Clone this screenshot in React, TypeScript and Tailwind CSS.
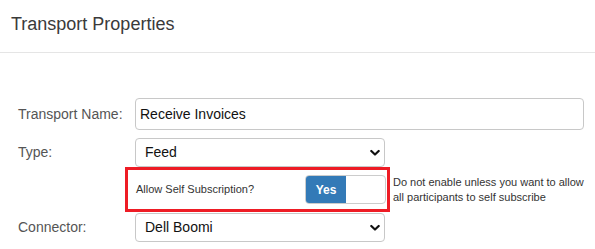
import { useState } from "react";

function Chevron() {
  return (
    <svg
      width="10"
      height="7"
      viewBox="0 0 10 7"
      className="pointer-events-none absolute right-[5px] top-1/2 -translate-y-1/2"
    >
      <polyline
        points="1.3,1.5 5,5 8.7,1.5"
        fill="none"
        stroke="#111"
        strokeWidth="2.2"
        strokeLinecap="round"
        strokeLinejoin="round"
      />
    </svg>
  );
}

function Select({ value, options }: { value: string; options: string[] }) {
  return (
    <div className="relative w-[250px]">
      <select
        defaultValue={value}
        className="h-[29px] w-full appearance-none rounded-[4px] border border-[#c8c8c8] bg-white pl-[9px] text-[14px] text-[#111] outline-none"
      >
        {options.map((o) => (
          <option key={o}>{o}</option>
        ))}
      </select>
      <Chevron />
    </div>
  );
}

export default function App() {
  const [allowSelf, setAllowSelf] = useState(true);

  return (
    <div className="h-[249px] w-[595px] bg-white font-['Liberation_Sans',Arial,sans-serif]">
      {/* Header */}
      <div className="h-[53px] border-b border-[#e5e5e5] pl-[11px] pt-[14px]">
        <h1 className="text-[18px] leading-[20px] text-[#3a3a3a]">Transport Properties</h1>
      </div>

      {/* Form */}
      <div className="mt-[45px]">
        <div className="flex items-center">
          <label className="w-[135px] pl-[18px] text-[14px] text-[#555]">Transport Name:</label>
          <input
            defaultValue="Receive Invoices"
            className="h-[32px] w-[449px] rounded-[4px] border border-[#c8c8c8] pl-[4px] text-[14px] text-[#111] outline-none"
          />
        </div>

        <div className="mt-[8px] flex items-center">
          <label className="w-[135px] pl-[18px] text-[14px] text-[#555]">Type:</label>
          <Select value="Feed" options={["Feed", "Request", "Response"]} />
        </div>

        <div className="flex items-center">
          <div className="ml-[125px] flex h-[45px] w-[265px] items-center justify-between border-[3px] border-[#ee1c25] pl-[8px] pr-[1px]">
            <span className="text-[11px] text-[#333]">Allow Self Subscription?</span>
            <button
              onClick={() => setAllowSelf(!allowSelf)}
              className="flex h-[29px] w-[81px] overflow-hidden rounded-[4px] border border-[#ccc] bg-white"
            >
              {allowSelf ? (
                <>
                  <span className="flex h-full w-[40px] items-center justify-center bg-[#337ab7] text-[12px] font-bold text-white">
                    Yes
                  </span>
                  <span className="flex-1" />
                </>
              ) : (
                <>
                  <span className="flex-1" />
                  <span className="flex h-full w-[40px] items-center justify-center bg-[#eee] text-[12px] font-bold text-[#333]">
                    No
                  </span>
                </>
              )}
            </button>
          </div>
          <p className="ml-[3px] text-[11px] leading-[15px] text-[#333]">
            Do not enable unless you want to allow
            <br />
            all participants to self subscribe
          </p>
        </div>

        <div className="mt-[1px] flex items-center">
          <label className="w-[135px] pl-[18px] text-[14px] text-[#555]">Connector:</label>
          <Select value="Dell Boomi" options={["Dell Boomi", "MuleSoft", "SFTP"]} />
        </div>
      </div>
    </div>
  );
}
